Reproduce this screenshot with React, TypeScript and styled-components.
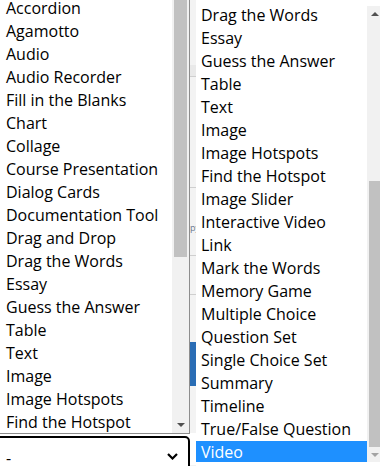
import styled, { createGlobalStyle } from "styled-components";

const leftItems = [
  "Accordion",
  "Agamotto",
  "Audio",
  "Audio Recorder",
  "Fill in the Blanks",
  "Chart",
  "Collage",
  "Course Presentation",
  "Dialog Cards",
  "Documentation Tool",
  "Drag and Drop",
  "Drag the Words",
  "Essay",
  "Guess the Answer",
  "Table",
  "Text",
  "Image",
  "Image Hotspots",
  "Find the Hotspot",
];

const rightItems = [
  "Drag the Words",
  "Essay",
  "Guess the Answer",
  "Table",
  "Text",
  "Image",
  "Image Hotspots",
  "Find the Hotspot",
  "Image Slider",
  "Interactive Video",
  "Link",
  "Mark the Words",
  "Memory Game",
  "Multiple Choice",
  "Question Set",
  "Single Choice Set",
  "Summary",
  "Timeline",
  "True/False Question",
  "Video",
];

const GlobalStyle = createGlobalStyle`
  html, body {
    margin: 0;
    padding: 0;
    background: #fff;
  }
  body {
    font-family: "Open Sans", "Noto Sans", sans-serif;
  }
`;

const Page = styled.div`
  display: flex;
  width: 380px;
  height: 466px;
  overflow: hidden;
  background: #fff;
`;

const LeftColumn = styled.div`
  display: flex;
  flex-direction: column;
  width: 190px;
  flex-shrink: 0;
`;

const ListBox = styled.div<{ $top: number; $height: number; $width: number; $bordered?: boolean }>`
  display: flex;
  flex-shrink: 0;
  margin-top: ${(p) => p.$top}px;
  width: ${(p) => p.$width}px;
  height: ${(p) => p.$height}px;
  background: #fff;
  overflow: hidden;
  box-sizing: border-box;
  border-right: ${(p) => (p.$bordered ? "1px solid #8d8d8d" : "none")};
  border-bottom: ${(p) => (p.$bordered ? "1px solid #8d8d8d" : "none")};
`;

const Options = styled.div`
  flex: 1;
  min-width: 0;
  overflow: hidden;
`;

const OptionList = styled.div<{ $offset: number }>`
  margin-top: ${(p) => p.$offset}px;
`;

const Option = styled.div<{ $pad: number; $selected?: boolean }>`
  height: 23px;
  line-height: 23px;
  font-size: 16px;
  padding-left: ${(p) => p.$pad}px;
  white-space: nowrap;
  color: ${(p) => (p.$selected ? "#fff" : "#000")};
  background: ${(p) => (p.$selected ? "#1e90ff" : "transparent")};
`;

const Scrollbar = styled.div<{ $width: number }>`
  display: flex;
  flex-direction: column;
  flex-shrink: 0;
  width: ${(p) => p.$width}px;
  background: #f1f1f1;
`;

const ArrowButton = styled.div<{ $height: number }>`
  display: flex;
  align-items: center;
  justify-content: center;
  height: ${(p) => p.$height}px;
  flex-shrink: 0;
`;

const Triangle = styled.div<{ $up?: boolean; $dim?: boolean }>`
  width: 0;
  height: 0;
  border-left: 4px solid transparent;
  border-right: 4px solid transparent;
  ${(p) =>
    p.$up
      ? `border-bottom: 4px solid ${p.$dim ? "#a3a3a3" : "#505050"};`
      : `border-top: 4px solid ${p.$dim ? "#a3a3a3" : "#505050"};`}
`;

const Thumb = styled.div<{ $top: number; $height: number; $inset: string }>`
  margin: ${(p) => p.$top}px ${(p) => p.$inset} 0;
  height: ${(p) => p.$height}px;
  background: #c1c1c1;
  flex-shrink: 0;
`;

const Spacer = styled.div`
  flex: 1;
`;

const SelectBox = styled.div`
  display: flex;
  align-items: center;
  justify-content: space-between;
  margin: 2px 0 0 -8px;
  height: 40px;
  padding: 0 10px 0 12px;
  border: 2px solid #000;
  border-radius: 5px;
  box-sizing: border-box;
  font-size: 16px;
  color: #000;
  background: #fff;
  flex-shrink: 0;
`;

const SelectValue = styled.span`
  padding-top: 4px;
`;

const Strip = styled.div`
  display: flex;
  flex-direction: column;
  width: 6px;
  flex-shrink: 0;
  background: #f3f3f3;
`;

const StripGap = styled.div<{ $h: number; $tone?: string }>`
  height: ${(p) => p.$h}px;
  flex-shrink: 0;
  background: ${(p) => p.$tone ?? "transparent"};
`;

const StripRule = styled.div`
  height: 1px;
  flex-shrink: 0;
  background: #cfcfcf;
`;

const StripText = styled.div`
  height: 12px;
  font-size: 9px;
  line-height: 12px;
  color: #6a7a90;
  overflow: hidden;
  white-space: nowrap;
  flex-shrink: 0;
`;

const Chevron = () => (
  <svg width="11" height="7" viewBox="0 0 11 7">
    <polyline points="1,1 5.5,5.5 10,1" fill="none" stroke="#000" strokeWidth="2.2" />
  </svg>
);

const App = () => {
  return (
    <>
      <GlobalStyle />
      <Page>
        <LeftColumn>
          <ListBox $top={0} $height={434} $width={190} $bordered>
            <Options>
              <OptionList $offset={-3}>
                {leftItems.map((item) => (
                  <Option key={item} $pad={6}>
                    {item}
                  </Option>
                ))}
              </OptionList>
            </Options>
            <Scrollbar $width={17}>
              <Thumb $top={0} $height={257} $inset="2px" />
              <Spacer />
              <ArrowButton $height={17}>
                <Triangle />
              </ArrowButton>
            </Scrollbar>
          </ListBox>
          <SelectBox>
            <SelectValue>-</SelectValue>
            <Chevron />
          </SelectBox>
        </LeftColumn>
        <Strip>
          <StripGap $h={65} />
          <StripGap $h={11} $tone="#e9e9e9" />
          <StripRule />
          <StripGap $h={110} />
          <StripRule />
          <StripGap $h={34} />
          <StripText>py</StripText>
          <StripGap $h={21} />
          <StripRule />
          <StripGap $h={38} />
          <StripRule />
          <StripGap $h={47} />
          <StripGap $h={44} $tone="#2a6db5" />
          <StripGap $h={47} />
          <StripGap $h={32} $tone="#fff" />
        </Strip>
        <ListBox $top={6} $height={456} $width={186}>
          <Options>
            <OptionList $offset={-2}>
              {rightItems.map((item) => (
                <Option key={item} $pad={5} $selected={item === "Video"}>
                  {item}
                </Option>
              ))}
            </OptionList>
          </Options>
          <Scrollbar $width={15}>
            <ArrowButton $height={15}>
              <Triangle $up />
            </ArrowButton>
            <Thumb $top={160} $height={266} $inset="2px" />
            <Spacer />
            <ArrowButton $height={15}>
              <Triangle $dim />
            </ArrowButton>
          </Scrollbar>
        </ListBox>
      </Page>
    </>
  );
};

export default App;
